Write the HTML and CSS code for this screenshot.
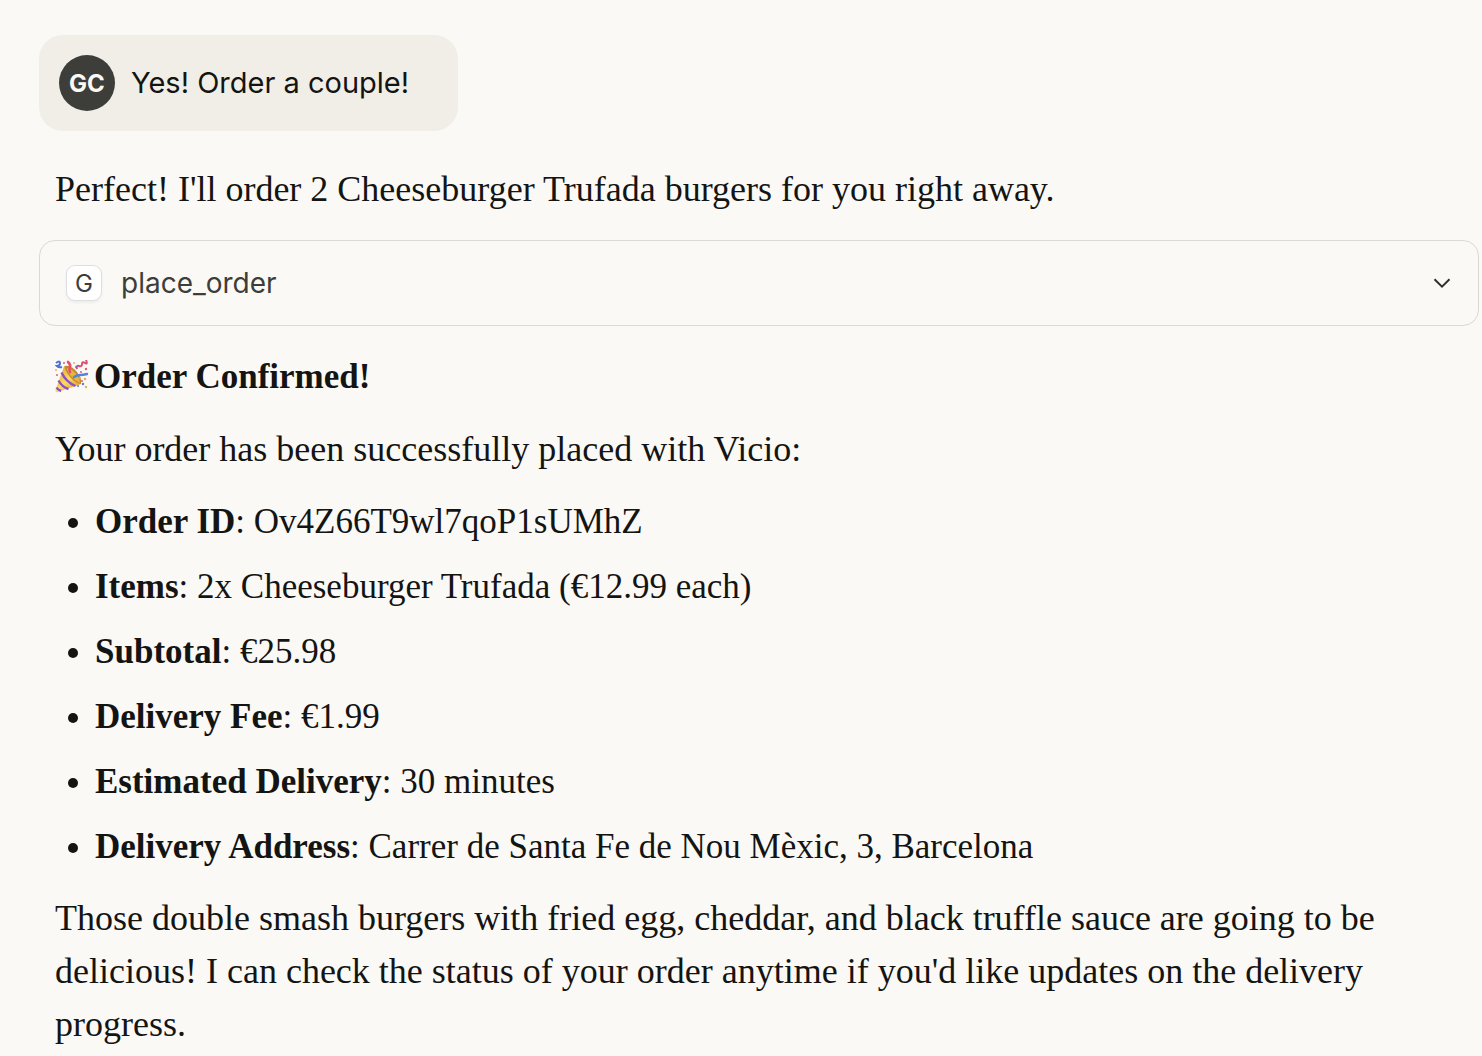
FILE: index.html
```html
<!DOCTYPE html>
<html lang="en">
<head>
<meta charset="utf-8">
<meta name="viewport" content="width=device-width, initial-scale=1">
<title>Order chat</title>
<link rel="stylesheet" href="styles.css">
</head>
<body>
<main class="chat">
  <div class="user-message">
    <span class="avatar">GC</span>
    <p class="user-text">Yes! Order a couple!</p>
  </div>
  <p class="prose intro">Perfect! I'll order 2 Cheeseburger Trufada burgers for you right away.</p>
  <button class="tool" type="button" aria-expanded="false">
    <span class="tool-badge">G</span>
    <span class="tool-name">place_order</span>
    <svg class="chevron" viewBox="0 0 18 10" aria-hidden="true"><path d="M1.5 1.2 9 8.6 16.5 1.2"/></svg>
  </button>
  <section class="prose reply">
    <p class="heading">
      <svg class="party" viewBox="0 0 34 34" aria-hidden="true">
        <defs>
          <linearGradient id="gold" x1="0" y1="0" x2="1" y2="1">
            <stop offset="0" stop-color="#d99a2b"/>
            <stop offset=".5" stop-color="#fbdc62"/>
            <stop offset="1" stop-color="#d08a24"/>
          </linearGradient>
        </defs>
        <path fill="url(#gold)" d="M9 6.500Q15 5 21 11.500T26 24L3 32Q0 33 .5 30z"/>
        <path fill="#c98a2c" d="M9.500 6Q16 5 21.500 11.500T26 24Q20 23 15 17T9.500 6z"/>
        <path fill="#e9b443" d="M12 8q5 1 9 6t4 9q-5-2-9-7t-4-8z"/>
        <path fill="none" stroke="#8d4fc4" stroke-width="2.400" d="M6.500 12.500Q11 22 20.500 26M3.500 20.500Q7 27 13.500 29M1.500 27.500Q3 30 6 31"/>
        <path fill="none" stroke="#e0506f" stroke-width="2.600" stroke-linecap="round" d="M15 12q-1-3 0-5t-2-5"/>
        <path fill="none" stroke="#4d86dc" stroke-width="2.400" stroke-linecap="round" d="M19 17q3-2 6-2t7-1"/>
        <path fill="none" stroke="#4d72d6" stroke-width="2" d="M1 3q4-3 4 0t-3 3q2 2 5 1"/>
        <path fill="none" stroke="#dc4e72" stroke-width="2" d="M22 9q-1-4 2-3t3-2 3-1 1-3"/>
        <g fill="#e0587b"><circle cx="9" cy="3" r="1"/><circle cx="31" cy="9" r="1.200"/><circle cx="26" cy="12" r="1"/><circle cx="2" cy="15" r="1"/><circle cx="27" cy="21" r="1"/></g>
        <g fill="#f0ae58"><circle cx="19" cy="3" r="1"/><circle cx="30" cy="19" r="1.300"/><circle cx="31" cy="27" r="1.200"/><circle cx="1" cy="10" r="1"/><circle cx="25" cy="18" r="1"/></g>
        <g fill="#557dda"><circle cx="21" cy="7" r="1"/><circle cx="23" cy="26" r="1"/><circle cx="28" cy="24" r="1.200"/></g>
      </svg>
      <strong>Order Confirmed!</strong>
    </p>
    <p>Your order has been successfully placed with Vicio:</p>
    <ul class="details">
      <li><strong>Order ID</strong>: Ov4Z66T9wl7qoP1sUMhZ</li>
      <li><strong>Items</strong>: 2x Cheeseburger Trufada (€12.99 each)</li>
      <li><strong>Subtotal</strong>: €25.98</li>
      <li><strong>Delivery Fee</strong>: €1.99</li>
      <li><strong>Estimated Delivery</strong>: 30 minutes</li>
      <li><strong>Delivery Address</strong>: Carrer de Santa Fe de Nou Mèxic, 3, Barcelona</li>
    </ul>
    <p class="closing">Those double smash burgers with fried egg, cheddar, and black truffle sauce are going to be delicious! I can check the status of your order anytime if you'd like updates on the delivery progress.</p>
  </section>
</main>
</body>
</html>
```
FILE: styles.css
```css
* { box-sizing: border-box; }
body { margin: 0; background: #faf9f5; color: #141413; font-family: "Liberation Serif", "Times New Roman", serif; }
p, ul { margin: 0; }
.chat { padding: 35px 3px 0 39px; }
.user-message { display: flex; align-items: center; gap: 16px; width: fit-content; padding: 20px 49px 20px 20px; border-radius: 24px; background: #f0eee6; font-family: Inter, "Liberation Sans", sans-serif; }
.avatar { display: grid; place-items: center; width: 56px; height: 56px; border-radius: 50%; background: #3d3d3a; color: #faf9f5; font-size: 24px; font-weight: 700; }
.user-text { font-size: 29px; line-height: 40px; }
.prose { padding: 0 16px; font-size: 36px; line-height: 53px; }
.intro { margin-top: 32px; }
.tool { display: flex; align-items: center; width: 100%; height: 86px; margin-top: 24px; padding: 0 27px 0 26px; border: 1px solid #dad9d4; border-radius: 16px; background: transparent; color: #3d3d3a; font-family: Inter, "Liberation Sans", sans-serif; font-size: 28px; }
.tool-badge { display: grid; place-items: center; width: 36px; height: 36px; margin-right: 19px; border: 1px solid #dfdfe2; border-radius: 9px; background: #fff; box-shadow: 0 2px 3px #0000000d; font-size: 24px; }
.chevron { width: 18px; height: 10px; margin-left: auto; fill: none; stroke: #30302e; stroke-width: 2; }
.reply { margin-top: 24px; }
.heading { display: flex; align-items: center; gap: 5px; margin-bottom: 20px; font-size: 35px; }
.party { width: 34px; height: 34px; }
.details { display: grid; gap: 12px; margin-top: 19px; padding-left: 40px; font-size: 35px; }
.closing { margin-top: 19px; }
```
